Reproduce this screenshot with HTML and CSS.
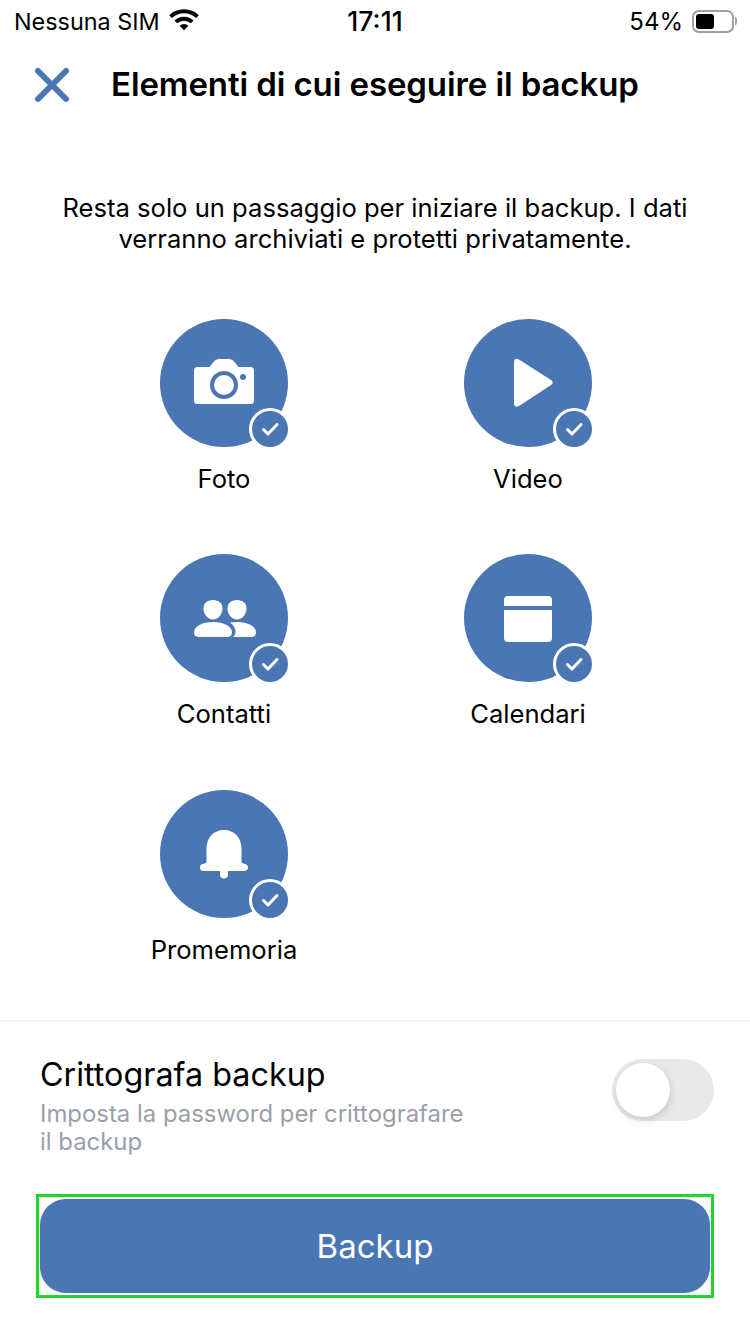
FILE: index.html
```html
<!DOCTYPE html>
<html lang="it">
<head>
  <meta charset="UTF-8">
  <meta name="viewport" content="width=device-width, initial-scale=1">
  <title>Elementi di cui eseguire il backup</title>
  <link rel="stylesheet" href="styles.css">
</head>
<body>
  <svg class="sprites" width="0" height="0" aria-hidden="true">
    <symbol id="tick" viewBox="0 0 36 36">
      <path d="M11.500 18.500l4.500 4.500 9-9.500" fill="none" stroke="#fff" stroke-width="3" stroke-linecap="round" stroke-linejoin="round"/>
    </symbol>
  </svg>

  <div class="status-bar">
    <div class="status-left">
      <span>Nessuna SIM</span>
      <svg class="wifi" viewBox="0 0 32 24" width="32" height="24">
        <path d="M1.200 8.200a21.500 21.500 0 0 1 29.600 0l-2.700 2.800a17.600 17.600 0 0 0-24.200 0z" fill="#000"/>
        <path d="M6.400 13.500a14 14 0 0 1 19.200 0l-2.800 2.800a10 10 0 0 0-13.600 0z" fill="#000"/>
        <path d="M11.600 18.800a6.600 6.600 0 0 1 8.800 0L16 23.200z" fill="#000"/>
      </svg>
    </div>
    <div class="status-time">17:11</div>
    <div class="status-right">
      <span>54%</span>
      <div class="battery"><div class="battery-level"></div></div>
      <div class="battery-cap"></div>
    </div>
  </div>

  <div class="nav">
    <svg class="close" viewBox="0 0 36 36" width="36" height="36">
      <path d="M4 4l28 28M32 4L4 32" fill="none" stroke="#4a76b4" stroke-width="6" stroke-linecap="round"/>
    </svg>
    <h1>Elementi di cui eseguire il backup</h1>
  </div>

  <p class="intro">Resta solo un passaggio per iniziare il backup. I dati verranno archiviati e protetti privatamente.</p>

  <div class="items">
    <div class="item">
      <div class="circle">
        <svg viewBox="0 0 128 128" width="128" height="128">
          <path d="M37.500 48h12l4-5q2-3 6-3h9q4 0 6 3l4 5h12q3.500 0 3.500 3.500v30q0 3.500-3.500 3.500h-53q-3.500 0-3.500-3.500v-30q0-3.500 3.500-3.500z" fill="#fff"/>
          <circle cx="64" cy="66" r="12" fill="none" stroke="#4a76b4" stroke-width="4"/>
          <circle cx="83" cy="58" r="3" fill="#4a76b4"/>
        </svg>
        <span class="badge"><svg width="36" height="36"><use href="#tick"/></svg></span>
      </div>
      <div class="label">Foto</div>
    </div>
    <div class="item">
      <div class="circle">
        <svg viewBox="0 0 128 128" width="128" height="128">
          <path d="M55 40.500l32 20.500q3.500 2.500 0 5L55 87q-5 2.500-5-3V43.500q0-5.500 5-3z" fill="#fff"/>
        </svg>
        <span class="badge"><svg width="36" height="36"><use href="#tick"/></svg></span>
      </div>
      <div class="label">Video</div>
    </div>
    <div class="item">
      <div class="circle">
        <svg viewBox="0 0 128 128" width="128" height="128">
          <path d="M53 46c6 0 9.500 3.500 9.500 8.500 0 5.500-4 11-9.500 11s-9.500-5.500-9.500-11c0-5 3.500-8.500 9.500-8.500z" fill="#fff"/>
          <path d="M77 46c6 0 9.500 3.500 9.500 8.500 0 5.500-4 11-9.500 11s-9.500-5.500-9.500-11c0-5 3.500-8.500 9.500-8.500z" fill="#fff"/>
          <path d="M53 68c11 0 19 4.500 19 10.500 0 3-2 4.500-5 4.500H39c-3 0-5-1.500-5-4.500C34 72.500 42 68 53 68z" fill="#fff"/>
          <path d="M70 68.500q3-.5 7-.5c11 0 19 4.500 19 10.500 0 3-2 4.500-5 4.500H73q2.500-2 2.500-5c0-4-2-7-5.500-9.500z" fill="#fff"/>
        </svg>
        <span class="badge"><svg width="36" height="36"><use href="#tick"/></svg></span>
      </div>
      <div class="label">Contatti</div>
    </div>
    <div class="item">
      <div class="circle">
        <svg viewBox="0 0 128 128" width="128" height="128">
          <path d="M44 42h40q4 0 4 4v6H40v-6q0-4 4-4zM40 56h48v28q0 4-4 4H44q-4 0-4-4z" fill="#fff"/>
        </svg>
        <span class="badge"><svg width="36" height="36"><use href="#tick"/></svg></span>
      </div>
      <div class="label">Calendari</div>
    </div>
    <div class="item">
      <div class="circle">
        <svg viewBox="0 0 128 128" width="128" height="128">
          <path d="M64 40c10.500 0 17.500 8 17.500 18.500V72q0 1 2 1.500l1.500.5q3 1 3 3.500t-3.500 3.500H68v3.500a4 4 0 0 1-8 0V81H43.500Q40 81 40 77.500t3-3.500l1.500-.5q2-.5 2-1.500V58.500C46.500 48 53.500 40 64 40z" fill="#fff"/>
        </svg>
        <span class="badge"><svg width="36" height="36"><use href="#tick"/></svg></span>
      </div>
      <div class="label">Promemoria</div>
    </div>
  </div>

  <div class="encrypt">
    <div class="encrypt-text">
      <div class="encrypt-title">Crittografa backup</div>
      <div class="encrypt-sub">Imposta la password per crittografare il backup</div>
    </div>
    <div class="toggle"><div class="thumb"></div></div>
  </div>

  <div class="footer">
    <div class="btn-frame">
      <button class="btn-backup" type="button">Backup</button>
    </div>
  </div>
</body>
</html>
```

FILE: styles.css
```css
:root {
  --blue: #4a76b4;
}

* { box-sizing: border-box; margin: 0; padding: 0; }
body {
  width: 750px;
  height: 1334px;
  overflow: hidden;
  background: #fff;
  color: #000;
  font-family: Inter, "Liberation Sans", sans-serif;
}

.sprites { display: block; height: 0; }

/* Status bar */
.status-bar {
  height: 42px;
  padding: 0 13px;
  display: grid;
  grid-template-columns: 1fr auto 1fr;
  align-items: center;
  font-size: 24px;
}
.status-left { display: flex; align-items: center; gap: 8px; margin-left: 1px; font-size: 23.400px; }
.status-left .wifi { margin-top: -4px; }
.status-time { font-size: 26.500px; font-weight: 500; }
.status-right { display: flex; align-items: center; justify-content: flex-end; }
.battery {
  width: 42px;
  height: 23px;
  margin-left: 9px;
  padding: 2px;
  border: 2px solid #a0a0a0;
  border-radius: 7px;
}
.battery-level { width: 18px; height: 15px; background: #000; border-radius: 3px; }
.battery-cap { width: 2px; height: 8px; margin-left: 1px; background: #a0a0a0; border-radius: 0 2px 2px 0; }

/* Nav */
.nav {
  height: 86px;
  padding-left: 34px;
  display: flex;
  align-items: center;
  gap: 41px;
}
.nav h1 { margin-top: -2px; font-size: 33px; font-weight: 600; letter-spacing: -0.1px; white-space: nowrap; }

.intro {
  padding: 0 55px;
  margin-top: 64px;
  font-size: 25.600px;
  line-height: 31px;
  text-align: center;
}

/* Backup items */
.items {
  margin-top: 65px;
  padding: 0 70px 0 72px;
  display: grid;
  grid-template-columns: 304px 304px;
  grid-auto-rows: 235.400px;
  height: 701px;
}
.item { display: flex; flex-direction: column; align-items: center; }
.circle {
  position: relative;
  width: 128px;
  height: 128px;
  border-radius: 50%;
  background: var(--blue);
}
.circle > svg { display: block; }
.badge {
  position: absolute;
  right: -3px;
  bottom: -3px;
  width: 42px;
  height: 42px;
  background: var(--blue);
  border: 3px solid #fff;
  border-radius: 50%;
  display: flex;
  align-items: center;
  justify-content: center;
}
.badge svg { display: block; flex: none; }
.label { margin-top: 17px; font-size: 25.600px; line-height: 30px; text-align: center; }

/* Encrypt row */
.encrypt {
  border-top: 2px solid #f2f2f6;
  padding: 33px 36px 0 40px;
  height: 172px;
  display: flex;
  justify-content: space-between;
  align-items: flex-start;
}
.encrypt-text { width: 435px; }
.encrypt-title { font-size: 32.300px; line-height: 40px; }
.encrypt-sub { margin-top: 5px; font-size: 23.900px; line-height: 28px; color: #9a9fa9; }
.toggle {
  width: 102px;
  height: 62px;
  margin-top: 4px;
  padding: 4px;
  border-radius: 31px;
  background: #e9e9ea;
}
.thumb {
  width: 54px;
  height: 54px;
  border-radius: 50%;
  background: #fff;
  box-shadow: 1px 3px 8px rgba(0,0,0,0.14);
}

/* Bottom button, with the green highlight box round it */
.footer { padding: 0 36px; margin-top: 2px; }
.btn-frame {
  width: 678px;
  height: 104px;
  padding: 2px 1px;
  border: 3px solid #22d42b;
}
.btn-backup {
  display: block;
  width: 670px;
  height: 94px;
  border: none;
  border-radius: 26px;
  background: var(--blue);
  color: #fff;
  font-family: inherit;
  font-size: 33px;
}
```
